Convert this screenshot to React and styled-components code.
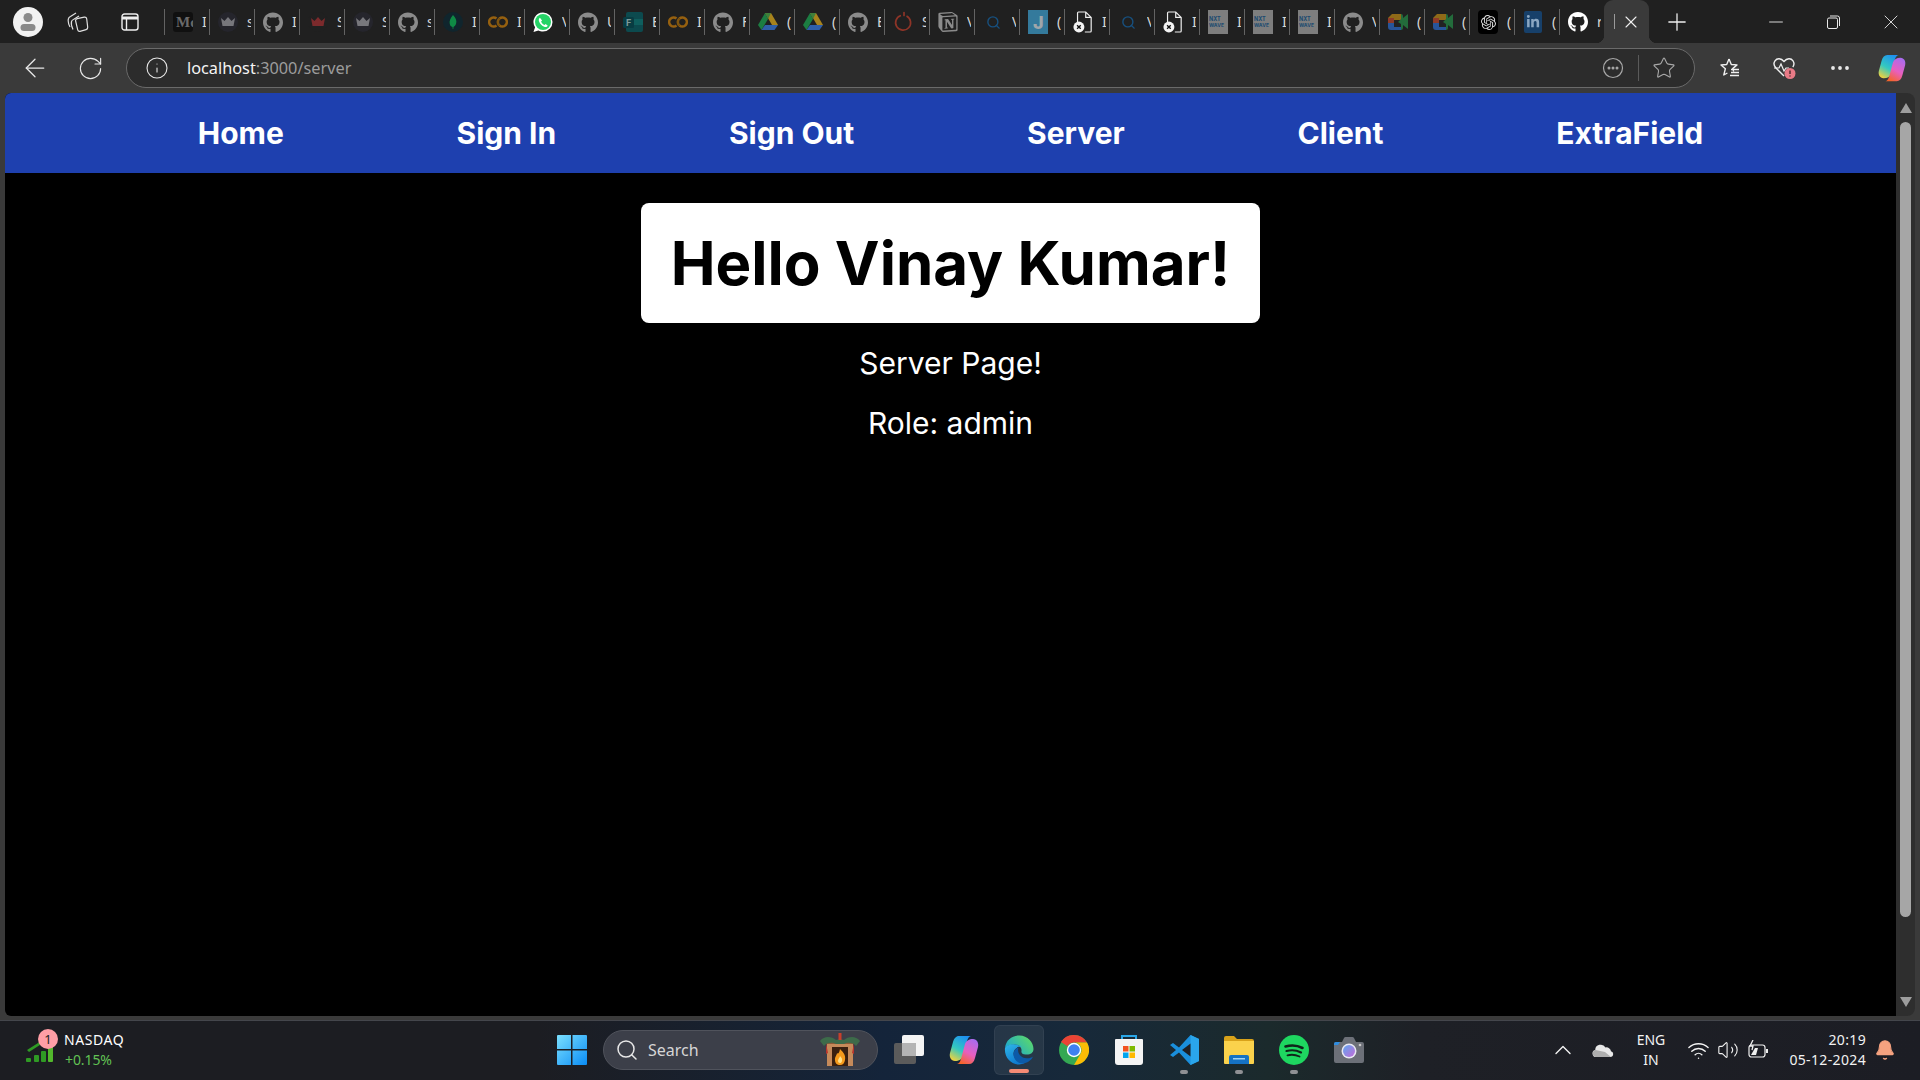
import React from "react";
import styled, { createGlobalStyle } from "styled-components";
import { FaGithub, FaLinkedinIn } from "react-icons/fa";
import { SiNotion, SiOpenai } from "react-icons/si";
import { Search, ArrowLeft, RotateCw, Info, Star, X, Plus, Minus, MoreHorizontal, ChevronUp, Wifi, Volume2, Bell } from "lucide-react";

const Global = createGlobalStyle`
  html, body { margin: 0; padding: 0; background: #3a3a3a; height: 100%; overflow: hidden; }
  * { box-sizing: border-box; }
  #root { height: 1080px; width: 1920px; }
`;

const Shell = styled.div`
  width: 1920px; height: 1080px; display: flex; flex-direction: column;
  font-family: "Noto Sans", "Open Sans", sans-serif; background: #3a3a3a; overflow: hidden;
`;
const TabStrip = styled.div`
  height: 43px; background: #202020; display: flex; align-items: center; padding-left: 3px; flex: none;
`;
const StripSlot = styled.div`
  width: ${p => p.$w || 50}px; height: 43px; display: flex; align-items: center; justify-content: center; color: #e6e6e6; flex: none;
`;
const TabRow = styled.div`
  display: flex; margin-left: 7px; align-items: center;
`;
const TabItem = styled.div`
  width: 45px; height: 26px; margin-top: 1px; flex: none; display: flex; align-items: center;
  border-left: 1px solid #636363; padding-left: 8px; overflow: hidden;
`;
const TabIcon = styled.span`
  width: 20px; height: 20px; flex: none; display: flex; align-items: center; justify-content: center;
  color: ${p => p.$color || "#8b8b8b"};
`;
const TabLabel = styled.span`
  width: 4px; margin-left: 9px; flex: none; overflow: hidden; font-size: 14px; line-height: 18px; color: #d8d8d8; white-space: nowrap;
`;
const ActiveTab = styled.div`
  position: relative; width: 45px; height: 43px; align-self: flex-end; background: #3a3a3a; border-radius: 9px 9px 0 0; flex: none;
  display: flex; align-items: center; padding-left: 10px; color: #f0f0f0;
  &::before, &::after { content: ""; position: absolute; bottom: 0; width: 8px; height: 8px; }
  &::before { left: -8px; background: radial-gradient(circle at 0 0, #202020 8px, #3a3a3a 8.5px); }
  &::after { right: -8px; background: radial-gradient(circle at 100% 0, #202020 8px, #3a3a3a 8.5px); }
`;
const ActiveSep = styled.span`
  width: 1px; height: 15px; background: #9a9a9a; margin-right: 6px; flex: none;
`;
const NewTab = styled.div`
  width: 28px; margin-left: 14px; display: flex; justify-content: center; color: #eee; flex: none;
`;
const WindowControls = styled.div`
  margin-left: auto; display: flex; height: 43px; flex: none; padding-right: 0.5px;
`;
const WindowButton = styled.div`
  width: 57.5px; display: flex; align-items: center; justify-content: center; color: #e8e8e8;
`;
const Toolbar = styled.div`
  height: 50px; display: flex; align-items: center; padding: 0 0 0 20px; flex: none; background: #3a3a3a; color: #e8e8e8;
`;
const ToolButton = styled.div`
  width: ${p => p.$w || 30}px; margin-left: ${p => p.$ml || 0}px; display: flex; justify-content: center; flex: none; align-items: center;
`;
const AddressBar = styled.div`
  width: 1569px; height: 40px; margin-left: 21px; flex: none; border-radius: 20px; border: 1px solid #6a6a6a; background: #2c2c2c;
  display: flex; align-items: center; padding: 0 18px 0 18px; color: #d8d8d8;
`;
const UrlText = styled.div`
  margin-left: 18px; font-size: 16.3px; color: #9c9c9c;
  b { font-weight: 400; color: #f4f4f4; }
`;
const BarRight = styled.div`
  margin-left: auto; display: flex; align-items: center; color: #a8a8a8;
`;
const BarDivider = styled.span`
  width: 1px; height: 26px; background: #5a5a5a; margin: 0 13px 0 14px;
`;
const ViewRow = styled.div`
  flex: 1; min-height: 0; display: flex; padding: 0 5px 4px 5px; background: #3a3a3a;
`;
const Page = styled.div`
  width: 1891px; flex: none; background: #000; border-radius: 6px 0 0 6px; overflow: hidden; display: flex; flex-direction: column; align-items: center;
  font-family: Inter, sans-serif;
`;
const SiteNav = styled.nav`
  width: 100%; height: 80px; flex: none; background: #1e40af; display: flex; align-items: center; justify-content: space-evenly; padding: 0 20px;
`;
const NavLink = styled.a`
  font-size: 30px; line-height: 36px; font-weight: 700; color: #fff; text-decoration: none;
`;
const Greeting = styled.h1`
  margin: 30px 0 0; padding: 30px; background: #fff; color: #000; border-radius: 8px;
  font-size: 60px; line-height: 60px; font-weight: 700; white-space: nowrap;
`;
const Line = styled.p`
  margin: ${p => p.$mt}px 0 0; font-size: 30px; line-height: 36px; color: #fff; font-weight: 400;
`;
const ScrollTrack = styled.div`
  width: 19px; flex: none; background: #2e2e2e; border-radius: 0 8px 8px 0; display: flex; flex-direction: column; align-items: center; padding-top: 10px;
`;
const Arrow = styled.span`
  width: 0; height: 0; border-left: 6.5px solid transparent; border-right: 6.5px solid transparent;
  ${p => p.$down ? "border-top: 10px solid #9d9d9d; margin-top: 80px;" : "border-bottom: 10px solid #9d9d9d;"}
`;
const Thumb = styled.span`
  width: 11px; height: 795px; margin-top: 9px; background: #a6a6a6; border-radius: 6px; flex: none;
`;
const Taskbar = styled.div`
  height: 60px; flex: none; display: flex; align-items: center; border-top: 1px solid #44464c; padding-bottom: 1px;
  background: linear-gradient(90deg, #1c1d22 0%, #1c1d22 28%, #14243a 46%, #17293a 56%, #1b2a2c 66%, #1e2026 74%, #1c1d24 100%);
  color: #fff;
`;
const Widget = styled.div`
  width: 544px; flex: none; padding-left: 26px; display: flex; align-items: center; position: relative; height: 100%;
`;
const WidgetBadge = styled.span`
  position: absolute; left: 38px; top: 8px; width: 20px; height: 20px; border-radius: 50%; background: #ff9ea6; color: #222;
  font-size: 13px; line-height: 20px; text-align: center;
`;
const WidgetText = styled.div`
  margin-left: 10px; display: flex; flex-direction: column; font-size: 14px; line-height: 20px;
`;
const WidgetName = styled.span`
  letter-spacing: 0.55px;
`;
const WidgetDelta = styled.span`
  color: #62c254; margin-left: 1px; letter-spacing: -0.1px;
`;
const StartSlot = styled.div`
  width: 56px; flex: none; display: flex; justify-content: center;
`;
const SearchBox = styled.div`
  width: 275px; height: 40px; margin-left: 3px; flex: none; border-radius: 20px; background: #3c3f49; border: 1px solid #50535c;
  display: flex; align-items: center; padding-left: 11px; color: #e8e8e8; font-size: 16px; position: relative;
`;
const SearchText = styled.span`
  margin-left: 9px; color: #d6d6d6;
`;
const SearchArt = styled.span`
  margin-left: auto; margin-right: 16px; display: flex;
`;
const Apps = styled.div`
  display: flex; margin-left: 3px; flex: none; height: 100%; align-items: center;
`;
const AppSlot = styled.div`
  width: 55px; height: 50px; flex: none; position: relative; display: flex; align-items: center; justify-content: center;
  ${p => p.$active ? "background: rgba(255,255,255,0.07); border: 1px solid rgba(255,255,255,0.05); border-radius: 6px; width: 50px; margin: 0 2.5px;" : ""}
  &::after {
    content: ""; position: absolute; bottom: 1px; left: 50%; transform: translateX(-50%); height: 4px; border-radius: 2px;
    width: ${p => p.$active ? 20 : p.$running ? 8 : 0}px;
    background: ${p => p.$active ? "#f58b75" : "#8f9094"};
  }
`;
const Tray = styled.div`
  margin-left: auto; display: flex; align-items: center; padding-right: 16px; height: 100%; font-size: 14px; flex: none; color: #f2f2f2;
`;
const TraySlot = styled.div`
  width: ${p => p.$w}px; display: flex; justify-content: center; flex: none; align-items: center;
`;
const LangBlock = styled.div`
  width: 56px; text-align: center; line-height: 20px; flex: none; font-size: 14px;
`;
const ClockBlock = styled.div`
  width: 89px; text-align: right; line-height: 20px; flex: none; font-size: 14px; letter-spacing: 0.35px;
`;

const Crown = ({ color = "#77777c", bg = "#25252c" }) => (
  <svg width="20" height="20" viewBox="0 0 20 20"><circle cx="10" cy="10" r="10" fill={bg} /><path d="M3 6l3.5 3L10 5l3.5 4L17 6l-1.5 8h-11z" fill={color} /></svg>
);
const Medium = () => (
  <svg width="20" height="20" viewBox="0 0 20 20"><rect width="20" height="20" rx="3" fill="#101010" /><text x="3" y="15" fontFamily="Liberation Serif, serif" fontSize="15" fontWeight="700" fill="#6a6a6a">Mc</text></svg>
);
const Leaf = () => (
  <svg width="20" height="20" viewBox="0 0 20 20"><circle cx="10" cy="10" r="10" fill="#10252d" /><path d="M10 3c3 3 4 6 3 9-.5 1.500-2 2.500-2.500 3l-.2 2h-.6l-.2-2C8 14.500 7 13.500 6.800 12 6 9 7.500 6 10 3z" fill="#0f8a45" /></svg>
);
const Colab = () => (
  <svg width="20" height="20" viewBox="0 0 20 20" fill="none" stroke="#96600f" strokeWidth="2.600"><path d="M8.500 6.500a4.500 4.500 0 1 0 0 7" /><path d="M11.500 6.500a4.500 4.500 0 1 1 0 7" /><path d="M11.500 6.500a4.500 4.500 0 0 0 0 7" stroke="#80550f" /></svg>
);
const WhatsApp = () => (
  <svg width="21" height="22" viewBox="0 0 21 22"><path d="M10.500 1a10 10 0 0 1 0 20c-1.700 0-3.400-.5-4.800-1.200L.5 21.500l1.700-5A10 10 0 0 1 10.500 1z" fill="#fff" /><circle cx="10.500" cy="11" r="8.400" fill="#25d366" /><path d="M7.300 6.500C6 7.300 5.800 9 6.500 10.800c1 2.500 3 4.400 5.300 5.200 1.600.6 3 .2 3.700-1.100l-2.200-1.700-1.200 1c-1.500-.6-2.900-2-3.600-3.700l1-1.100z" fill="#fff" /></svg>
);
const Forms = () => (
  <svg width="20" height="20" viewBox="0 0 20 20"><rect x="3" y="0" width="17" height="20" rx="2" fill="#0c4a4e" /><rect x="11" y="7" width="9" height="6" fill="#0f5f5e" /><rect x="0" y="5" width="11" height="11" rx="1.500" fill="#083c42" /><text x="3" y="14" fontFamily="Inter, sans-serif" fontSize="9" fontWeight="700" fill="#7f9a9a">F</text></svg>
);
const Drive = () => (
  <svg width="20" height="20" viewBox="0 0 20 20"><path d="M7 1h6l7 12h-6z" fill="#a8831c" /><path d="M7 1l3 6-6.500 11L0 13z" fill="#1c7d42" /><path d="M3.500 18L7 13h13l-3.500 5z" fill="#2f5fa8" /><path d="M7 1h6l-3 6z" fill="#3f7f3a" /></svg>
);
const Flame = () => (
  <svg width="20" height="22" viewBox="0 0 20 22" fill="none" stroke="#8e3427" strokeWidth="1.700"><path d="M8 4.500A7.500 7.500 0 1 0 13.500 5" /><path d="M11 1.500v3" strokeLinecap="round" /></svg>
);
const Jira = () => (
  <svg width="20" height="24" viewBox="0 0 20 24"><rect width="20" height="24" fill="#347a9c" /><text x="5" y="19" fontFamily="Inter, sans-serif" fontSize="18" fontWeight="800" fill="#9fa6aa">J</text></svg>
);
const DocLock = () => (
  <svg width="22" height="26" viewBox="0 0 22 26" fill="none"><path d="M6 2h8l6 6v15a1 1 0 0 1-1 1h-6M14 2v6h6M5 13V3a1 1 0 0 1 1-1" stroke="#f0f0f0" strokeWidth="1.300" /><circle cx="6.500" cy="18.500" r="6" fill="#f4f4f4" /><path d="M4.500 16.500l4 4m0-4l-4 4" stroke="#111" strokeWidth="1.500" /></svg>
);
const Nxt = () => (
  <svg width="20" height="24" viewBox="0 0 20 24"><rect width="20" height="24" fill="#7e7e7e" /><text x="1" y="11" fontFamily="Inter, sans-serif" fontSize="5.500" fontWeight="700" fill="#1a4a70">NXT</text><text x="1" y="17" fontFamily="Inter, sans-serif" fontSize="5" fontWeight="700" fill="#1a4a70">WAVE</text></svg>
);
const Meet = () => (
  <svg width="20" height="20" viewBox="0 0 20 20"><path d="M4 2h9v6H6v3H0V6z" fill="#8f6a18" /><path d="M0 11h6v4h7v3H3a3 3 0 0 1-3-3z" fill="#28559a" /><path d="M6 8h7v7H6z" fill="#222" /><path d="M13 2a2 2 0 0 1 2 2v2l5-4v15l-5-4v3a2 2 0 0 1-2 2v-6l-3-2 3-3z" fill="#236c3b" /><path d="M0 6h6v5H0z" fill="#8e3a28" /></svg>
);
const OpenAiWrap = styled.span`
  width: 20px; height: 24px; border-radius: 4px; background: #000; display: flex; align-items: center; justify-content: center; color: #dcdcdc;
`;
const LinkedIn = styled.span`
  width: 18px; height: 22px; background: #17406a; border-radius: 2px; display: flex; align-items: center; justify-content: center; color: #8aa6c2;
`;

const GH = () => <FaGithub size={21} />;
const tabs = [
  [<Medium />, "I"], [<Crown />, "s"], [<GH />, "I"], [<Crown color="#7c2a2c" bg="#202020" />, "S"], [<Crown />, "S"], [<GH />, "s"],
  [<Leaf />, "I"], [<Colab />, "I"], [<WhatsApp />, "V"], [<GH />, "U"], [<Forms />, "E"], [<Colab />, "I"], [<GH />, "F"],
  [<Drive />, "("], [<Drive />, "("], [<GH />, "E"], [<Flame />, "S"], [<SiNotion size={20} />, "V"], [<Search size={15} color="#17507f" strokeWidth={2.2} />, "V"],
  [<Jira />, "("], [<DocLock />, "I"], [<Search size={15} color="#17507f" strokeWidth={2.2} />, "V"], [<DocLock />, "I"],
  [<Nxt />, "I"], [<Nxt />, "I"], [<Nxt />, "I"], [<GH />, "V"], [<Meet />, "("], [<Meet />, "("],
  [<OpenAiWrap><SiOpenai size={15} /></OpenAiWrap>, "("], [<LinkedIn><FaLinkedinIn size={14} /></LinkedIn>, "("],
];

const Avatar = () => (
  <svg width="30" height="30" viewBox="0 0 30 30"><circle cx="15" cy="15" r="15" fill="#f2f2f2" /><circle cx="15" cy="10.500" r="4.500" fill="#8a8a8a" /><rect x="7.500" y="17" width="15" height="7" rx="3.500" fill="#8a8a8a" /></svg>
);
const Collections = () => (
  <svg width="22" height="22" viewBox="0 0 22 22" fill="none" stroke="#e0e0e0" strokeWidth="1.200"><path d="M3 16C1 12 1 9 1.500 7.500c.3-1 1-1.500 2-2L9 2" /><path d="M6 18.500c-1.500-3-2-6-1.500-8 .3-1 1-1.700 2-2L12 5" /><path d="M8.500 9.500c.2-1 .8-1.600 1.700-1.800l7-1.500c1.300-.2 2.300.4 2.500 1.600l1 8.500c.1 1.200-.5 2-1.600 2.300L13 20.300c-1.200.2-2-.4-2.300-1.500z" /></svg>
);
const VerticalTabs = () => (
  <svg width="18" height="18" viewBox="0 0 18 18" fill="none" stroke="#eee" strokeWidth="1.400"><rect x="1" y="1" width="16" height="16" rx="2.500" /><path d="M1 5h16" strokeWidth="3" /><path d="M5.500 6v11" /></svg>
);
const RestoreIcon = () => (
  <svg width="13" height="14" viewBox="0 0 13 14" fill="none" stroke="#e8e8e8" strokeWidth="1"><rect x="0.500" y="3" width="10" height="10.500" rx="1.500" /><path d="M3 1h7.500a2 2 0 0 1 2 2v8" /></svg>
);
const SiteInfo = () => (
  <svg width="22" height="22" viewBox="0 0 22 22" fill="none" stroke="#a8a8a8" strokeWidth="1.200"><circle cx="11" cy="11" r="9.500" /><circle cx="7" cy="11" r="0.900" fill="#a8a8a8" /><circle cx="11" cy="11" r="0.900" fill="#a8a8a8" /><circle cx="15" cy="11" r="0.900" fill="#a8a8a8" /></svg>
);
const Favs = () => (
  <svg width="22" height="22" viewBox="0 0 22 22" fill="none" stroke="#f0f0f0" strokeWidth="1.400" strokeLinejoin="round"><path d="M10 2l2.300 5.500 5.700.4-4.300 3.700 1 3M10 2L7.700 7.500 2 8l4.400 3.700L4.800 18l3.600-2" /><path d="M12 12.500h8M12 15.500h8M11 18.500h9" /></svg>
);
const Health = () => (
  <svg width="26" height="26" viewBox="0 0 26 26" fill="none"><path d="M12 21L4 13c-2-2-2.500-5 -1-7.200C5 3 9 3 12 6.500 15 3 19 3 21 5.800c1.400 2 1 4.500-.2 6.200" stroke="#f0f0f0" strokeWidth="1.400" /><path d="M2 13h5l2-4 3 7 2-3h3" stroke="#f0f0f0" strokeWidth="1.200" /><circle cx="18" cy="18.500" r="5.500" fill="#e87a86" /><path d="M18 15.500v3.500M18 20.500v1" stroke="#3a2226" strokeWidth="1.300" /></svg>
);
const Copilot = ({ size, id }) => (
  <svg width={size} height={size} viewBox="0 0 32 32">
    <defs>
      <linearGradient id={id + "l"} x1="0.700" y1="0" x2="0.200" y2="1"><stop offset="0" stopColor="#1e90f0" /><stop offset="0.55" stopColor="#34c9c0" /><stop offset="1" stopColor="#f2d23c" /></linearGradient>
      <linearGradient id={id + "r"} x1="0.800" y1="0" x2="0.300" y2="1"><stop offset="0" stopColor="#a66cf0" /><stop offset="0.55" stopColor="#e85fc0" /><stop offset="1" stopColor="#f5642c" /></linearGradient>
    </defs>
    <path d="M11 2h12c-2 .5-3 2-4 5l-4 15c-1 3-4 5-8 5-4 0-6-4-5-8L5 8C6 4.500 8 2 11 2z" fill={`url(#${id}l)`} />
    <path d="M21 30H9c2-.5 3-2 4-5l4-15c1-3 4-5 8-5 4 0 6 4 5 8l-3 11c-1 4-3 6-6 6z" fill={`url(#${id}r)`} />
  </svg>
);
const Trend = () => (
  <svg width="28" height="26" viewBox="0 0 28 26"><path d="M1 13L16 3.500l-1.500-1.500 6-.5-1 5.500-1.700-1.500L3 15z" fill="#2f9a24" /><rect x="0" y="21" width="5" height="4" rx="1" fill="#2f9a24" /><rect x="8" y="18" width="5" height="7" rx="1" fill="#2f9a24" /><rect x="15" y="14" width="5" height="11" rx="1" fill="#2f9a24" /><rect x="22" y="8" width="5" height="17" rx="1" fill="#52b82c" /></svg>
);
const WinLogo = () => (
  <svg width="30" height="30" viewBox="0 0 30 30">
    <defs><linearGradient id="wl" x1="0" y1="0" x2="1" y2="1"><stop offset="0" stopColor="#7be0ff" /><stop offset="1" stopColor="#0a8cf5" /></linearGradient></defs>
    <path d="M0 1a1 1 0 0 1 1-1h13v14H0zM15.500 0H29a1 1 0 0 1 1 1v13H15.500zM0 15.500h14V30H1a1 1 0 0 1-1-1zM15.500 15.500H30V29a1 1 0 0 1-1 1H15.500z" fill="url(#wl)" />
  </svg>
);
const Fireplace = () => (
  <svg width="42" height="34" viewBox="0 0 42 34">
    <path d="M8 9h26v24H8z" fill="#c58a5a" />
    <path d="M6 8h30v3H6z" fill="#8c5a38" />
    <path d="M13 14h16v19H13z" fill="#3a2010" />
    <path d="M21 16c3 3 6 6 5 11-.5 3-2 5-5 5s-5-2-5-5c-.5-3 2-5 2-7 1 1 2 1 3-4z" fill="#f59a1c" />
    <path d="M21 23c1.500 1.500 2.500 3 2 5-.4 1.500-1 2-2 2s-2-.8-2-2.200c0-1.500 1.500-2.800 2-4.800z" fill="#ffe08a" />
    <path d="M1 8c5-6 12-4 16-1 3-1 5-1 8 0 4-3 11-5 16 1l-4 5c-3-4-9-4-12-2h-8c-3-2-9-2-12 2z" fill="#3d6b4a" />
    <rect x="19.500" y="0" width="3" height="7" fill="#c8402c" />
    <path d="M7 10l2 10-2 1zM35 10l-2 10 2 1z" fill="#b8352c" />
  </svg>
);
const TaskView = () => (
  <svg width="32" height="32" viewBox="0 0 32 32"><rect x="1" y="9" width="22" height="21" rx="2" fill="#5b5b5b" /><rect x="9" y="1" width="22" height="21" rx="2" fill="#f4f4f4" /><rect x="9" y="9" width="14" height="13" fill="#b4b4b4" /></svg>
);
const Edge = () => (
  <svg width="32" height="32" viewBox="0 0 32 32">
    <defs>
      <linearGradient id="eg" x1="0" y1="0.800" x2="1" y2="0.200"><stop offset="0" stopColor="#17a2d8" /><stop offset="1" stopColor="#5edb66" /></linearGradient>
      <linearGradient id="eb" x1="0" y1="0" x2="0.500" y2="1"><stop offset="0" stopColor="#2fb6e8" /><stop offset="1" stopColor="#0f7ad0" /></linearGradient>
    </defs>
    <path d="M2 14C3 6 9 1.500 16.500 1.500 24.500 1.500 30.500 8 30.500 15c0 4-3.500 6-8 5.500-3-.3-4.500-1.500-4-3.500C19 14 16 10.500 12 10.500 7.500 10.500 4 11.500 2 14z" fill="url(#eg)" />
    <path d="M2 14C1 23 7.500 30.500 16 30.500c2 0 4-.5 5.500-1.200C16 29 10.500 25 10.500 19.500c0-4 3.500-7.500 8-6.500C14.500 9.500 5 9 2 14z" fill="url(#eb)" />
    <path d="M21.500 29.300C15 30.500 10 25 10.500 19.500c.3-3 2.500-5.500 5-6-1.500 4 1 9.500 6.500 10.500 3 .6 6 .2 8-1.500-1 3-4.500 5.600-8.500 6.800z" fill="#0c5aa8" />
  </svg>
);
const Chrome = () => (
  <svg width="30" height="30" viewBox="0 0 30 30">
    <circle cx="15" cy="15" r="15" fill="#34a853" />
    <path d="M15 0a15 15 0 0 1 13 7.500H15a7.500 7.500 0 0 0-6.500 3.750L2 7A15 15 0 0 1 15 0z" fill="#ea4335" />
    <path d="M28 7.500A15 15 0 0 1 15 30l6.500-11.250A7.500 7.500 0 0 0 15 7.500z" fill="#fbbc05" />
    <circle cx="15" cy="15" r="7.200" fill="#fff" /><circle cx="15" cy="15" r="5.800" fill="#3f80f0" />
  </svg>
);
const StoreBag = () => (
  <svg width="30" height="32" viewBox="0 0 30 32">
    <path d="M8 6V2h14v4" fill="none" stroke="#2aa7e8" strokeWidth="2" />
    <path d="M2 5h26a1 1 0 0 1 1 1v22a3 3 0 0 1-3 3H4a3 3 0 0 1-3-3V6a1 1 0 0 1 1-1z" fill="#f4f4f4" />
    <rect x="9" y="12" width="5.500" height="5.500" fill="#f2521f" /><rect x="15.500" y="12" width="5.500" height="5.500" fill="#7fba00" />
    <rect x="9" y="18.500" width="5.500" height="5.500" fill="#00a4ef" /><rect x="15.500" y="18.500" width="5.500" height="5.500" fill="#ffb900" />
  </svg>
);
const VsCode = () => (
  <svg width="30" height="30" viewBox="0 0 30 30">
    <path d="M21.500 0L30 4v22l-8.500 4L10 17.500 4 22l-3-2 6-5-6-5 3-2 6 4.500z" fill="#1a8fdc" />
    <path d="M21.500 0L30 4v22l-8.500 4z" fill="#2aa6ec" />
    <path d="M21.500 8.500L13 15l8.500 6.500z" fill="#1f2024" />
  </svg>
);
const Folder = () => (
  <svg width="30" height="28" viewBox="0 0 30 28">
    <path d="M0 2a2 2 0 0 1 2-2h8l3 3h15a2 2 0 0 1 2 2v3H0z" fill="#d9a21a" />
    <path d="M0 5h30v22a1 1 0 0 1-1 1H1a1 1 0 0 1-1-1z" fill="#fbd24c" />
    <path d="M5 21a2 2 0 0 1 2-2h16a2 2 0 0 1 2 2v7H5z" fill="#1572c4" />
    <rect x="9" y="22" width="12" height="1.500" fill="#9fd2f5" />
  </svg>
);
const Spotify = () => (
  <svg width="30" height="30" viewBox="0 0 30 30" fill="none" stroke="#10241a" strokeLinecap="round">
    <circle cx="15" cy="15" r="15" fill="#1ed760" stroke="none" />
    <path d="M6.500 11.500c6-1.700 12-1.200 17 1.500" strokeWidth="2.600" />
    <path d="M7.500 16c5-1.300 10-.9 14.500 1.400" strokeWidth="2.200" />
    <path d="M8.500 20.300c4-1 8-.7 12 1.200" strokeWidth="1.900" />
  </svg>
);
const Camera = () => (
  <svg width="30" height="28" viewBox="0 0 30 28">
    <defs><linearGradient id="cm" x1="0" y1="0" x2="1" y2="1"><stop offset="0" stopColor="#5fa8f0" /><stop offset="1" stopColor="#c36ad8" /></linearGradient></defs>
    <path d="M2 6h6l2-4a2 2 0 0 1 1.500-1h7a2 2 0 0 1 1.500 1l2 4h6a2 2 0 0 1 2 2v17a2 2 0 0 1-2 2H2a2 2 0 0 1-2-2V8a2 2 0 0 1 2-2z" fill="#6c7078" />
    <path d="M0 8a2 2 0 0 1 2-2h4l-2 3H0z" fill="#2f8de0" />
    <circle cx="15" cy="15" r="7.500" fill="#e8e8f2" /><circle cx="15" cy="15" r="6" fill="url(#cm)" />
    <circle cx="26" cy="9" r="1.300" fill="#c8c8c8" />
  </svg>
);
const Cloud = () => (
  <svg width="22" height="14" viewBox="0 0 22 14"><path d="M4 14a3.500 3.500 0 0 1-.8-6.900A5.500 5.500 0 0 1 13.500 4.500 4.500 4.500 0 0 1 19 8.200 3 3 0 0 1 19 14z" fill="#e8e8e8" /><path d="M4 14a3.500 3.500 0 0 1-.5-6.900L13 9l6 5z" fill="#aeaeae" /></svg>
);
const Battery = () => (
  <svg width="21" height="20" viewBox="0 0 21 20" fill="none" stroke="#efefef" strokeWidth="1.200"><rect x="1" y="5" width="16" height="12" rx="2.500" /><path d="M19 9v4" strokeWidth="2" /><path d="M3 15l4-7h3l-2 7z" fill="#efefef" stroke="none" /><path d="M5 0L2 6h3l-1 4" strokeWidth="1.300" /></svg>
);

export default function App() {
  return (
    <Shell>
      <Global />
      <TabStrip>
        <StripSlot><Avatar /></StripSlot>
        <StripSlot><Collections /></StripSlot>
        <StripSlot $w={54}><VerticalTabs /></StripSlot>
        <TabRow>
          {tabs.map(([icon, ch], i) => (
            <TabItem key={i}><TabIcon>{icon}</TabIcon><TabLabel>{ch}</TabLabel></TabItem>
          ))}
          <TabItem><TabIcon $color="#fff"><FaGithub size={22} /></TabIcon><TabLabel>r</TabLabel></TabItem>
        </TabRow>
        <ActiveTab><ActiveSep /><X size={20} strokeWidth={1.3} /></ActiveTab>
        <NewTab><Plus size={28} strokeWidth={1.1} /></NewTab>
        <WindowControls>
          <WindowButton><Minus size={22} strokeWidth={1} /></WindowButton>
          <WindowButton><RestoreIcon /></WindowButton>
          <WindowButton><X size={24} strokeWidth={0.9} /></WindowButton>
        </WindowControls>
      </TabStrip>
      <Toolbar>
        <ToolButton><ArrowLeft size={32} strokeWidth={1} /></ToolButton>
        <ToolButton $ml={25}><RotateCw size={27} strokeWidth={1} /></ToolButton>
        <AddressBar>
          <Info size={24} strokeWidth={1.1} color="#e6e6e6" />
          <UrlText><b>localhost</b>:3000/server</UrlText>
          <BarRight>
            <SiteInfo />
            <BarDivider />
            <Star size={24} strokeWidth={1.1} />
          </BarRight>
        </AddressBar>
        <ToolButton $ml={20} $w={30}><Favs /></ToolButton>
        <ToolButton $ml={25} $w={30}><Health /></ToolButton>
        <ToolButton $ml={25} $w={30}><MoreHorizontal size={24} strokeWidth={1.8} /></ToolButton>
        <ToolButton $ml={22} $w={30}><Copilot size={30} id="cp1" /></ToolButton>
      </Toolbar>
      <ViewRow>
        <Page>
          <SiteNav>
            <NavLink>Home</NavLink>
            <NavLink>Sign In</NavLink>
            <NavLink>Sign Out</NavLink>
            <NavLink>Server</NavLink>
            <NavLink>Client</NavLink>
            <NavLink>ExtraField</NavLink>
          </SiteNav>
          <Greeting>Hello Vinay Kumar!</Greeting>
          <Line $mt={22}>Server Page!</Line>
          <Line $mt={24}>Role: admin</Line>
        </Page>
        <ScrollTrack>
          <Arrow />
          <Thumb />
          <Arrow $down />
        </ScrollTrack>
      </ViewRow>
      <Taskbar>
        <Widget>
          <Trend />
          <WidgetBadge>1</WidgetBadge>
          <WidgetText><WidgetName>NASDAQ</WidgetName><WidgetDelta>+0.15%</WidgetDelta></WidgetText>
        </Widget>
        <StartSlot><WinLogo /></StartSlot>
        <SearchBox>
          <Search size={24} strokeWidth={1.5} />
          <SearchText>Search</SearchText>
          <SearchArt><Fireplace /></SearchArt>
        </SearchBox>
        <Apps>
          <AppSlot><TaskView /></AppSlot>
          <AppSlot><Copilot size={32} id="cp2" /></AppSlot>
          <AppSlot $active><Edge /></AppSlot>
          <AppSlot><Chrome /></AppSlot>
          <AppSlot><StoreBag /></AppSlot>
          <AppSlot $running><VsCode /></AppSlot>
          <AppSlot $running><Folder /></AppSlot>
          <AppSlot $running><Spotify /></AppSlot>
          <AppSlot><Camera /></AppSlot>
        </Apps>
        <Tray>
          <TraySlot $w={40}><ChevronUp size={28} strokeWidth={1.2} /></TraySlot>
          <TraySlot $w={40}><Cloud /></TraySlot>
          <LangBlock>ENG<br />IN</LangBlock>
          <TraySlot $w={38}><Wifi size={23} strokeWidth={1.5} /></TraySlot>
          <TraySlot $w={22}><Volume2 size={24} strokeWidth={1.2} /></TraySlot>
          <TraySlot $w={38}><Battery /></TraySlot>
          <ClockBlock>20:19<br />05-12-2024</ClockBlock>
          <TraySlot $w={38}><Bell size={22} color="#f5a27f" fill="#f5a27f" strokeWidth={1.2} /></TraySlot>
        </Tray>
      </Taskbar>
    </Shell>
  );
}
